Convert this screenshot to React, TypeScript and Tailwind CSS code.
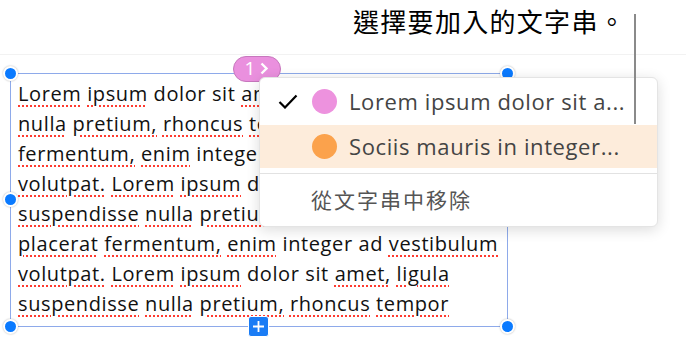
import React from "react";

const lines = [
  "Lorem ipsum dolor sit amet, ligula suspendisse",
  "nulla pretium, rhoncus tempor placerat",
  "fermentum, enim integer ad vestibulum",
  "volutpat. Lorem ipsum dolor sit amet, ligula",
  "suspendisse nulla pretium, rhoncus tempor",
  "placerat fermentum, enim integer ad vestibulum",
  "volutpat. Lorem ipsum dolor sit amet, ligula",
  "suspendisse nulla pretium, rhoncus tempor",
];

const plainWords = ["dolor", "sit", "integer", "ad"];

function TextLine({ text }: { text: string }) {
  const words = text.split(" ");
  return (
    <div className="whitespace-nowrap h-[30px] leading-[30px]">
      {words.map((w, i) => (
        <React.Fragment key={i}>
          {plainWords.includes(w) ? (
            <span>{w}</span>
          ) : (
            <span className="underline decoration-dotted decoration-[#ff3b30] decoration-2 underline-offset-[4px]">
              {w}
            </span>
          )}
          {i < words.length - 1 ? " " : ""}
        </React.Fragment>
      ))}
    </div>
  );
}

function Handle({ className }: { className: string }) {
  return (
    <div
      className={`absolute w-[15px] h-[15px] rounded-full bg-[#0a7aff] border-2 border-white shadow-[0_0_2px_rgba(0,0,0,0.3)] ${className}`}
    />
  );
}

export default function App() {
  return (
    <div className="relative w-[686px] h-[343px] bg-white overflow-hidden font-['Open_Sans','Noto_Sans',sans-serif]">
      {/* callout */}
      <div className="h-[55px] border-b border-[#f2f2f2] flex justify-end pr-[60px] pt-[3px]">
        <p className="text-[26px] leading-[36px] tracking-[1.3px] text-black font-['Noto_Sans_CJK_TC',sans-serif]">
          選擇要加入的文字串。
        </p>
      </div>
      <div className="absolute left-[634px] top-[14px] w-[2px] h-[110px] bg-[#8a8a8a] z-30" />

      {/* text box */}
      <div className="relative ml-[10px] mt-[18px] w-[498px] h-[254px] border border-[#8eaaea] pl-[7px] pt-[5px] text-[20px] tracking-[0.6px] text-[#111]">
        {lines.map((l, i) => (
          <TextLine key={i} text={l} />
        ))}
        <Handle className="-left-[8px] -top-[8px]" />
        <Handle className="-right-[8px] -top-[8px]" />
        <Handle className="-left-[8px] top-[118px]" />
        <Handle className="-left-[8px] -bottom-[8px]" />
        <Handle className="-right-[8px] -bottom-[8px]" />
        <div className="absolute left-[237px] -bottom-[11px] w-[21px] h-[21px] rounded-[3px] bg-[#1a7cf5] border border-white flex items-center justify-center">
          <svg width="13" height="13" viewBox="0 0 13 13">
            <path d="M6.5 1v11M1 6.5h11" stroke="white" strokeWidth="1.8" />
          </svg>
        </div>
      </div>

      {/* badge */}
      <div className="absolute left-[233px] top-[56px] w-[48px] h-[26px] rounded-full bg-[#ea90de] border border-[#c777bd] flex items-start justify-center gap-[4px] text-white text-[19px] leading-[22px] z-10">
        <span>1</span>
        <svg width="10" height="13" viewBox="0 0 10 13" className="mt-[5px]">
          <path d="M2.5 1.5l5 5-5 5" stroke="white" strokeWidth="2.4" fill="none" />
        </svg>
      </div>

      {/* menu */}
      <div className="absolute left-[259px] top-[77px] w-[399px] h-[150px] bg-white rounded-[6px] border border-[#e4e4e4] shadow-[0_3px_14px_rgba(0,0,0,0.14)] z-20 overflow-hidden text-[22px] text-[#444]">
        <div className="h-[47px] flex items-center">
          <div className="w-[52px] flex justify-end pr-[14px]">
            <svg width="20" height="15" viewBox="0 0 20 15">
              <path d="M1.5 8l5.5 5.5 11.5-12" stroke="black" strokeWidth="2.2" fill="none" />
            </svg>
          </div>
          <div className="w-[25px] h-[25px] rounded-full bg-[#ed92de]" />
          <span className="ml-[12px] tracking-[0.6px]">Lorem ipsum dolor sit a...</span>
        </div>
        <div className="h-[43px] flex items-center bg-[#fdecdb]">
          <div className="w-[52px]" />
          <div className="w-[25px] h-[25px] rounded-full bg-[#fba24c]" />
          <span className="ml-[12px] tracking-[0.6px]">Sociis mauris in integer...</span>
        </div>
        <div className="mt-[5px] border-t border-[#e2e2e2]" />
        <div className="h-[52px] flex items-center pl-[51px] text-[#555] text-[21px] font-['Noto_Sans_CJK_TC',sans-serif] tracking-[2px]">
          從文字串中移除
        </div>
      </div>
    </div>
  );
}
